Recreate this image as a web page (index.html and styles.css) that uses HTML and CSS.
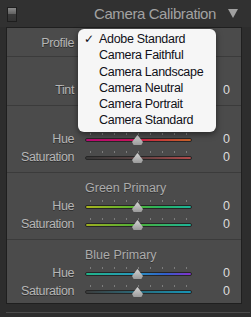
FILE: index.html
```html
<!DOCTYPE html>
<html lang="en">
<head>
  <meta charset="UTF-8" />
  <title>Camera Calibration</title>
  <link rel="stylesheet" href="styles.css">
</head>
<body>

  <div class="header">
    <span class="switch"></span>
    <span class="title">Camera Calibration</span>
    <span class="caret"></span>
  </div>

  <div class="panel">
    <div class="section profile">
      <div class="row">
        <span class="label">Profile</span>
      </div>
    </div>

    <!-- the popup covers this section's heading -->
    <div class="section">
      <div class="sec-title"></div>
      <div class="row">
        <span class="label">Tint</span>
        <div class="slider"><div class="track tint"></div><span class="thumb"></span></div>
        <span class="value">0</span>
      </div>
    </div>

    <div class="section">
      <div class="sec-title"></div>
      <div class="row">
        <span class="label">Hue</span>
        <div class="slider"><div class="track red-hue"></div><span class="thumb"></span></div>
        <span class="value">0</span>
      </div>
      <div class="row">
        <span class="label">Saturation</span>
        <div class="slider"><div class="track red-sat"></div><span class="thumb"></span></div>
        <span class="value">0</span>
      </div>
    </div>

    <div class="section">
      <div class="sec-title">Green Primary</div>
      <div class="row">
        <span class="label">Hue</span>
        <div class="slider"><div class="track green-hue"></div><span class="thumb"></span></div>
        <span class="value">0</span>
      </div>
      <div class="row">
        <span class="label">Saturation</span>
        <div class="slider"><div class="track green-sat"></div><span class="thumb"></span></div>
        <span class="value">0</span>
      </div>
    </div>

    <div class="section">
      <div class="sec-title">Blue Primary</div>
      <div class="row">
        <span class="label">Hue</span>
        <div class="slider"><div class="track blue-hue"></div><span class="thumb"></span></div>
        <span class="value">0</span>
      </div>
      <div class="row">
        <span class="label">Saturation</span>
        <div class="slider"><div class="track blue-sat"></div><span class="thumb"></span></div>
        <span class="value">0</span>
      </div>
    </div>
  </div>

  <div class="footer-line"></div>

  <!-- profile popup menu -->
  <ul class="popup">
    <li class="checked">Adobe Standard</li>
    <li>Camera Faithful</li>
    <li>Camera Landscape</li>
    <li>Camera Neutral</li>
    <li>Camera Portrait</li>
    <li>Camera Standard</li>
  </ul>

</body>
</html>
```

FILE: styles.css
```css
* {
  margin: 0;
  padding: 0;
  box-sizing: border-box;
}

body {
  font-family: 'Liberation Sans', Arial, sans-serif;
  background-color: #2d2d2d;
  width: 251px;
  height: 317px;
  overflow: hidden;
  position: relative;
}

.header {
  height: 27px;
  display: flex;
  align-items: center;
  padding: 0 13px 0 7px;
  background: #313131;
}

.switch {
  width: 10px;
  height: 15px;
  border: 1px solid #1e1e1e;
  background: linear-gradient(#8a8a8a, #5e5e5e 50%, #3a3a3a 50%, #333);
  margin-top: 1px;
}

.title {
  margin-left: auto;
  font-size: 15px;
  letter-spacing: -0.4px;
  color: #a2a2a2;
}

.caret {
  width: 0;
  height: 0;
  margin-left: 12px;
  border-left: 5px solid transparent;
  border-right: 5px solid transparent;
  border-top: 9px solid #a0a0a0;
}

.panel {
  margin: 0 9px 0 6px;
  height: 277px;
  background: #4b4b4b;
  border: 1px solid #1f1f1f;
}

.section {
  padding: 6px 0;
  border-top: 1px solid #3b3b3b;
}

.section:first-child {
  border-top: none;
  padding: 6px 0 4px;
}

.sec-title {
  height: 18px;
  line-height: 18px;
  padding-left: 78px;
  font-size: 12.5px;
  color: #acacac;
  text-shadow: 0 1px 0 #333;
}

.row {
  height: 18px;
  display: flex;
  align-items: center;
}

.label {
  width: 67px;
  text-align: right;
  font-size: 12.5px;
  letter-spacing: -0.4px;
  color: #b6b6b6;
  text-shadow: 0 1px 0 #2e2e2e;
}

.slider {
  position: relative;
  width: 107px;
  height: 18px;
  margin-left: 11px;
  background: repeating-linear-gradient(90deg, transparent 0 5px, #7c7c7c 5px 6px, transparent 6px 12px) 0 3px / 100% 2px no-repeat;
}

.track {
  margin-top: 8px;
  height: 4px;
  border-radius: 2px;
  border: 1px solid #262626;
}

.tint { background: linear-gradient(90deg, #3ea040, #9a9a9a 50%, #b040a0); }
.red-hue { background: linear-gradient(90deg, #b80c74, #c8145a 45%, #c83040 60%, #c8642a); }
.red-sat { background: linear-gradient(90deg, #383838, #5a4242 50%, #b04a4a); }
.green-hue { background: linear-gradient(90deg, #aab41e, #58b430 45%, #28b460 70%, #1cb49a); }
.green-sat { background: linear-gradient(90deg, #9eae20, #4ab038 50%, #1cb49a); }
.blue-hue { background: linear-gradient(90deg, #20b488, #2898bc 45%, #3060cc 75%, #8430cc); }
.blue-sat { background: linear-gradient(90deg, #3c3c3c, #2a6a7a 50%, #1694b6); }

.thumb {
  position: absolute;
  left: 47px;
  top: 5px;
  width: 11px;
  height: 10px;
  background: linear-gradient(#d4d4d4, #9a9a9a);
  clip-path: polygon(50% 0, 100% 70%, 85% 100%, 15% 100%, 0 70%);
}

.value {
  margin-left: auto;
  margin-right: 11px;
  font-size: 12.5px;
  color: #dcdcdc;
}

.footer-line {
  margin: 8px 1px 0 6px;
  height: 1px;
  background: #4c4c4c;
}

.popup {
  position: absolute;
  left: 78px;
  top: 29px;
  width: 138px;
  height: 103px;
  padding: 2px 0 0;
  list-style: none;
  background: #f6f6f6;
  border-radius: 6px;
  box-shadow: 0 2px 6px rgba(0, 0, 0, 0.5);
}

.popup li {
  position: relative;
  height: 16.3px;
  line-height: 16.3px;
  padding-left: 21px;
  font-size: 12.5px;
  letter-spacing: -0.3px;
  color: #101018;
}

.popup li.checked::before {
  content: "✓";
  position: absolute;
  left: 6px;
  font-family: 'DejaVu Sans', sans-serif;
  font-size: 12px;
  font-weight: bold;
}
```
